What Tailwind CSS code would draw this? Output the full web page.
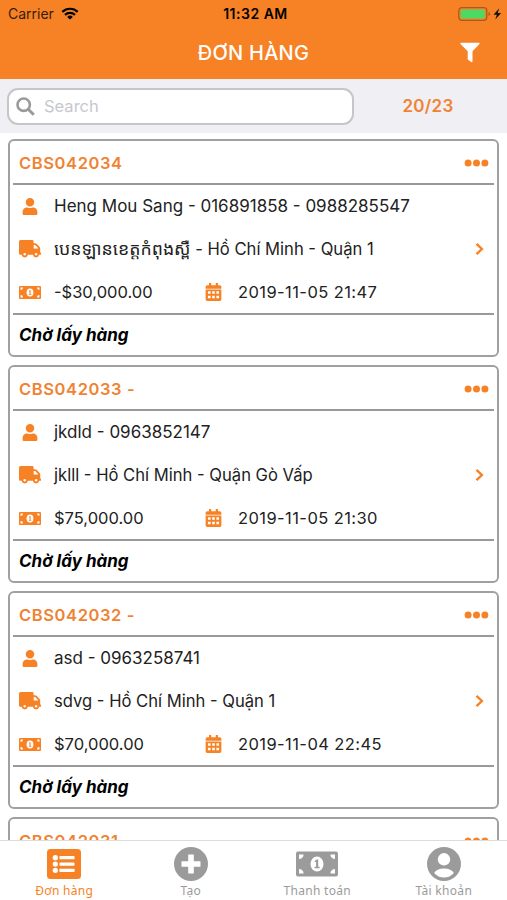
<!DOCTYPE html>
<html lang="vi">
<head>
<meta charset="utf-8">
<title>Đơn hàng</title>
<script src="https://cdn.jsdelivr.net/npm/@tailwindcss/browser@4"></script>
</head>
<body class="bg-white">
<svg class="hidden">
  <symbol id="user" viewBox="0 0 448 512"><path d="M224 256c70.7 0 128-57.3 128-128S294.7 0 224 0 96 57.3 96 128s57.3 128 128 128zm89.6 32h-16.7c-22.2 10.2-46.9 16-72.9 16s-50.6-5.8-72.9-16h-16.7C60.2 288 0 348.2 0 422.4V464c0 26.5 21.5 48 48 48h352c26.5 0 48-21.500 48-48v-41.600c0-74.200-60.200-134.400-134.400-134.400z"/></symbol>
  <symbol id="truck" viewBox="0 0 22 18"><path fill-rule="evenodd" d="M1.600 0h11.600q1.400 0 1.400 1.400v1.800h1.600q.8 0 1.400.6l3 3.200q.6.600.6 1.400v4.200h.3q.5 0 .5.500v1.200q0 .5-.5.500h-1.300a3.200 3.200 0 0 1-6.300 0H8.900a3.200 3.200 0 0 1-6.300 0H1.400Q0 14.800 0 13.400V1.600Q0 0 1.600 0zM14.700 5v3.400h4.700L16.200 5zM5.700 12.900a1.300 1.300 0 1 0 .01 0zM17.100 12.900a1.300 1.300 0 1 0 .01 0z"/></symbol>
  <symbol id="bill" viewBox="0 0 42 25"><rect width="42" height="25" rx="2"/><g fill="#fff"><path d="M3 3h4.600a4.600 4.600 0 0 1-4.600 4.600zM39 3h-4.600a4.600 4.600 0 0 0 4.600 4.600zM3 22h4.600a4.600 4.600 0 0 0-4.600-4.600zM39 22h-4.600a4.600 4.600 0 0 1 4.600-4.600z"/><ellipse cx="21" cy="12.500" rx="6.500" ry="7.500"/></g><path d="M18.800 9.200l2-1.200h1.400v7.200h1.400v1.600h-5v-1.600h1.500v-5l-1.300.5z"/></symbol>
  <symbol id="calendar" viewBox="0 0 448 512"><path d="M0 160v-48c0-26.500 21.500-48 48-48h48V12c0-6.600 5.400-12 12-12h40c6.600 0 12 5.400 12 12v52h128V12c0-6.600 5.400-12 12-12h40c6.600 0 12 5.400 12 12v52h48c26.500 0 48 21.500 48 48v48z"/><path fill-rule="evenodd" d="M0 182h448v282c0 26.500-21.500 48-48 48H48c-26.500 0-48-21.500-48-48zM66 232v72h76v-72zM186 232v72h76v-72zM306 232v72h76v-72zM66 360v72h76v-72zM186 360v72h76v-72zM306 360v72h76v-72z"/></symbol>
  <symbol id="dots" viewBox="0 0 24 8"><circle cx="3.600" cy="4" r="3.500"/><circle cx="12" cy="4" r="3.500"/><circle cx="20.400" cy="4" r="3.500"/></symbol>
  <symbol id="chev" viewBox="0 0 9 14"><path d="M1.500 1.800L6.900 7l-5.400 5.200" fill="none" stroke="currentColor" stroke-width="2.400"/></symbol>
</svg>
<div class="w-[507px] h-[900px] flex flex-col overflow-hidden bg-white font-['Inter','Noto_Sans_Khmer','Noto_Sans',sans-serif] text-[#222]">
  <header class="h-[79px] shrink-0 bg-[#f78225] flex flex-col">
    <div class="h-[27px] grid grid-cols-3 items-center text-black text-[14px] pl-[8px] pr-[5px]">
      <div class="flex items-center gap-[7px] text-[#33200c]"><span>Carrier</span>
        <svg class="w-[18px] h-[13px] text-black" viewBox="0 0 18 13" fill="none" stroke="currentColor" stroke-width="2.200"><path d="M1.300 4.900a11 11 0 0 1 15.400 0M4 7.900a7.200 7.200 0 0 1 10 0"/><path d="M9 12.500L6.200 9.900a4 4 0 0 1 5.600 0z" fill="currentColor" stroke="none"/></svg>
      </div>
      <div class="text-center font-semibold text-[14px] tracking-[0.500px] whitespace-nowrap pl-px">11:32 AM</div>
      <div class="flex justify-end items-center">
        <svg class="w-[44px] h-[14px]" viewBox="0 0 44 14"><rect x=".8" y=".7" width="28" height="12.600" rx="3" fill="none" stroke="#a85b1c" stroke-width="1.300"/><rect x="2.800" y="2.500" width="24" height="9" rx="1.500" fill="#4cd964"/><path d="M30.500 5v4q1.700-.6 1.700-2t-1.700-2z" fill="#a85b1c"/><path d="M41.300 1.200L35.500 7.800h3.300l-1.500 4.800 5.800-6.700h-3.400z" fill="#111"/></svg>
      </div>
    </div>
    <div class="h-[51px] grid grid-cols-[1fr_auto_1fr] items-center text-white">
      <div></div>
      <h1 class="text-[20px] font-medium tracking-[0.250px]">ĐƠN HÀNG</h1>
      <svg class="w-[20px] h-[21px] justify-self-end mr-[27px]" viewBox="0 0 20 21" fill="currentColor"><path d="M1 .8h18q1 .3.500 1.300L12.500 9.300v10.200q-.3 1-1.300.6l-3.500-2.600V9.300L.5 2.100Q0 1.100 1 .8z"/></svg>
    </div>
  </header>
  <div class="h-[54px] shrink-0 bg-[#efeff4] flex items-center pl-[7px]">
    <div class="w-[347px] h-[37px] rounded-[11px] border-2 border-[#c6c6c8] bg-white flex items-center pl-[7px] gap-[9px] text-[#c7c7cd] text-[16.500px]">
      <svg class="w-[19px] h-[19px] text-[#9a9a9a]" viewBox="0 0 19 19" fill="none" stroke="currentColor" stroke-width="2.600"><circle cx="7.700" cy="7.700" r="6.200"/><path d="M12.200 12.200l5.600 5.600" stroke-width="3"/></svg>
      <span>Search</span>
    </div>
    <div class="flex-1 text-center text-[17px] font-semibold text-[#f08333] tracking-[0.300px] pr-[5px] pt-[2px]">20/23</div>
  </div>
  <main id="list" class="flex-1 min-h-0 overflow-hidden pt-[6px] px-[8px] flex flex-col gap-[9px]"></main>
  <nav class="h-[60px] shrink-0 border-t border-[#dcdcdc] bg-white grid grid-cols-4 text-[12px] leading-[18px] text-[#9b9b9b] font-['Noto_Sans',sans-serif] tracking-[0.300px] pl-px">
    <div class="flex flex-col items-center pt-[5px] text-[#f78225]">
      <svg class="w-[34px] h-[36px]" viewBox="0 0 34 36" fill="currentColor"><rect y="3" width="34" height="30" rx="3.500"/><g fill="#fff"><circle cx="8.300" cy="11.700" r="2.600"/><circle cx="8.300" cy="18" r="2.600"/><circle cx="8.300" cy="24.300" r="2.600"/><rect x="12.500" y="10" width="15" height="3.300" rx=".6"/><rect x="12.500" y="16.400" width="15" height="3.300" rx=".6"/><rect x="12.500" y="22.700" width="15" height="3.300" rx=".6"/></g></svg>
      <span>Đơn hàng</span>
    </div>
    <div class="flex flex-col items-center pt-[5px]">
      <svg class="w-[36px] h-[36px]" viewBox="0 0 36 36" fill="currentColor"><circle cx="18" cy="18" r="17"/><path d="M15.200 8.500h5.600v6.700h6.700v5.600h-6.700v6.700h-5.600v-6.700H8.500v-5.600h6.700z" fill="#fff"/></svg>
      <span>Tạo</span>
    </div>
    <div class="flex flex-col items-center pt-[5px]">
      <svg class="w-[42px] h-[36px]" fill="currentColor"><use href="#bill"/></svg>
      <span>Thanh toán</span>
    </div>
    <div class="flex flex-col items-center pt-[5px]">
      <svg class="w-[36px] h-[36px]" viewBox="0 0 36 36" fill="currentColor"><circle cx="18" cy="18" r="17"/><circle cx="18" cy="13.300" r="6.200" fill="#fff"/><path d="M8.200 27q2.500-4.500 9.800-4.500t9.800 4.500q-4 4.500-9.800 4.500T8.200 27z" fill="#fff"/></svg>
      <span>Tài khoản</span>
    </div>
  </nav>
</div>
<script>
const orders = [
  ['CBS042034', 'Heng Mou Sang - 016891858 - 0988285547', '<span class="text-[17.700px] leading-[20px]">បេនឡានខេត្តកំពុងស្ពឺ</span> - Hồ Chí Minh - Quận 1', '-$30,000.00', '2019-11-05 21:47'],
  ['CBS042033 -', 'jkdld - 0963852147', 'jklll - Hồ Chí Minh - Quận Gò Vấp', '$75,000.00', '2019-11-05 21:30'],
  ['CBS042032 -', 'asd - 0963258741', 'sdvg - Hồ Chí Minh - Quận 1', '$70,000.00', '2019-11-04 22:45'],
  ['CBS042031', '', '', '', '']
];
document.getElementById('list').innerHTML = orders.map(([id, who, where, cost, date]) => `
  <article class="h-[218px] -mb-px shrink-0 rounded-[6px] border-2 border-[#a0a0a0] px-[3px] flex flex-col text-[16.500px] whitespace-nowrap">
    <div class="h-[44px] shrink-0 border-b-2 border-[#999] flex items-center justify-between pt-[2px] pl-[6px] pr-[5px] text-[#f08333]">
      <span class="font-semibold tracking-[0.600px]">${id}</span>
      <svg class="w-[25px] h-[8px] text-[#f78225]" fill="currentColor"><use href="#dots"/></svg>
    </div>
    <div class="h-[43px] shrink-0 flex items-center pl-[6px]">
      <svg class="w-[22px] h-[17px] mr-[13px] text-[#f78225]" fill="currentColor"><use href="#user"/></svg><span class="text-[17px]">${who}</span>
    </div>
    <div class="h-[42px] mb-px shrink-0 flex items-center pl-[6px] pr-[10px]">
      <svg class="w-[22px] h-[18px] mr-[13px] text-[#f78225]" fill="currentColor"><use href="#truck"/></svg><span class="text-[16.600px]">${where}</span>
      <svg class="w-[9px] h-[14px] ml-auto text-[#f78225]"><use href="#chev"/></svg>
    </div>
    <div class="h-[42px] shrink-0 flex items-center pl-[6px]">
      <svg class="w-[22px] h-[17px] mr-[13px] text-[#f78225]" fill="currentColor"><use href="#bill"/></svg><span class="w-[151px]">${cost}</span>
      <svg class="w-[17px] h-[18px] mr-[16px] text-[#f78225]" fill="currentColor"><use href="#calendar"/></svg><span class="tracking-[0.420px]">${date}</span>
    </div>
    <div class="flex-1 border-t-2 border-[#999] flex items-center pt-[2px] pl-[6px] text-[17px] font-bold italic text-black">Chờ lấy hàng</div>
  </article>`).join('');
</script>
</body>
</html>
